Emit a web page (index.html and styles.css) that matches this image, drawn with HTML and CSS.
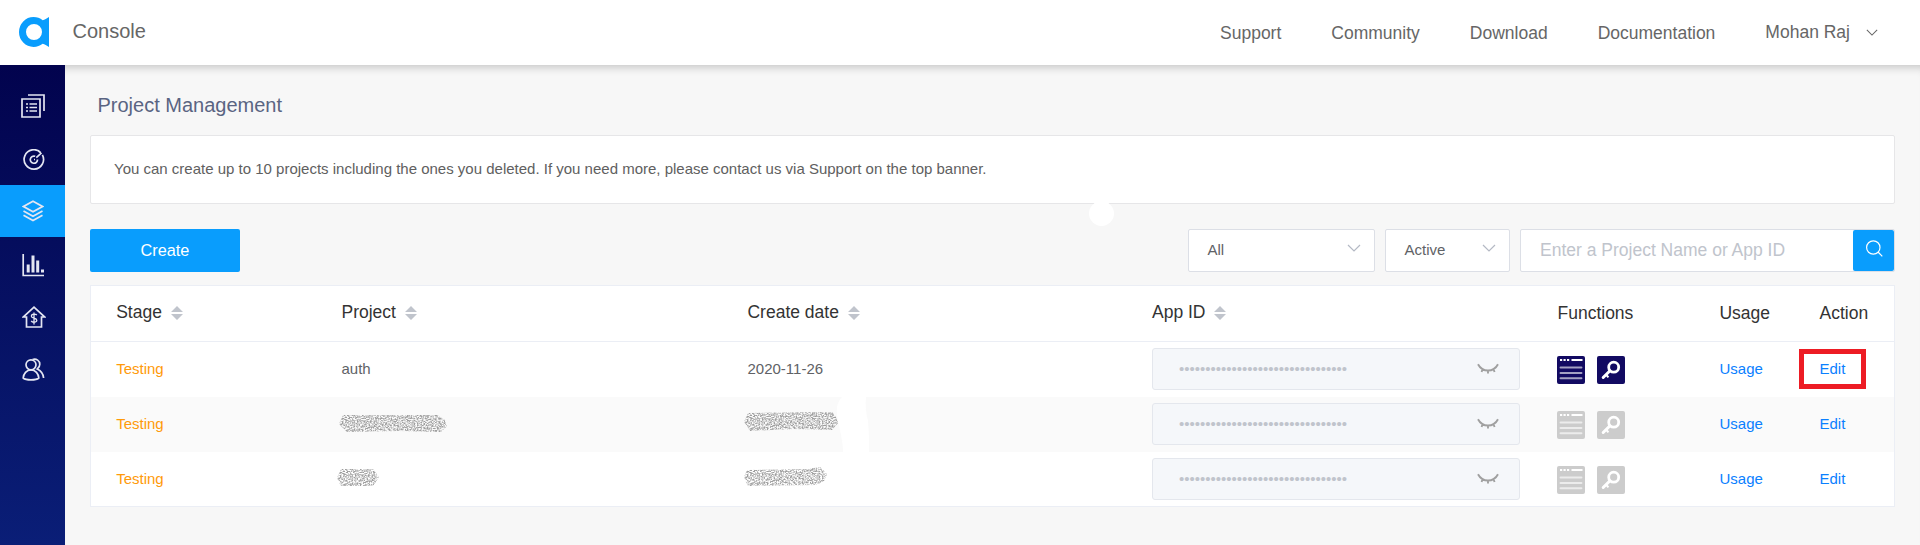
FILE: index.html
```html
<!DOCTYPE html>
<html lang="en">
<head>
<meta charset="utf-8">
<title>Console</title>
<link rel="stylesheet" href="styles.css">
</head>
<body>
<svg class="defs" width="0" height="0">
  <defs>
    <symbol id="sort" viewBox="0 0 12 14"><path d="M6 0l6 6H0zM6 14L0 8h12z" fill="#c0c4cc"/></symbol>
    <symbol id="chev" viewBox="0 0 14 8"><path d="M1 1l6 6 6-6" fill="none" stroke="currentColor" stroke-width="1.2"/></symbol>
    <symbol id="eye" viewBox="0 0 22 12"><path d="M1 1.200C5.500 9.600 16.500 9.600 21 1.200M5.600 6L4.600 9M11 7.500V10.600M16.400 6l1.200 3" fill="none" stroke="#a0a0a0" stroke-width="1.900"/></symbol>
    <symbol id="page" viewBox="0 0 28 28"><rect width="28" height="28" rx="2" fill="currentColor"/><path d="M3 4h2.200M6.500 4h2.200M10 4h2.200M14.500 4H25.500" stroke="#fff" stroke-width="2.200"/><path d="M3.500 11.500h21M3.500 17h21M3.500 22.300h21" stroke="#fff" stroke-opacity=".62" stroke-width="1.900" stroke-linecap="round"/></symbol>
    <symbol id="key" viewBox="0 0 28 28"><rect width="28" height="28" rx="2" fill="currentColor"/><g fill="none" stroke="#fff"><circle cx="16.700" cy="11.200" r="5" stroke-width="2.800"/><path d="M13 14.800L6.200 21.500" stroke-width="3" stroke-linecap="round"/><path d="M9 18.500l2.400 2.800" stroke-width="2"/></g></symbol>
    <filter id="speckle" x="0" y="0" width="1" height="1" color-interpolation-filters="sRGB">
      <feTurbulence type="fractalNoise" baseFrequency=".6 .9" numOctaves="2" seed="4"/>
      <feColorMatrix values="0 0 0 0 .62  0 0 0 0 .62  0 0 0 0 .62  3 0 0 0 -1.050"/>
      <feComposite in2="SourceGraphic" operator="in"/>
    </filter>
  </defs>
</svg>
<header class="topbar">
  <svg class="logo" viewBox="0 0 30 30"><path fill="#099dfd" fill-rule="evenodd" d="M14.500 0c3.600 0 6.600 1.200 9.200 3.200C25.600 2.700 27.800 1.500 30 0v30c-2.200-1.500-4.400-2.700-6.300-3.200C21.100 28.800 18.100 30 14.500 30A14.500 15 0 0 1 14.500 0zM15 7a8 8 0 1 0 0 16 8 8 0 0 0 0-16z"/></svg>
  <span class="brand">Console</span>
  <nav class="nav"><a>Support</a><a>Community</a><a>Download</a><a>Documentation</a></nav>
  <div class="user">Mohan Raj<svg class="user-chev"><use href="#chev"/></svg></div>
</header>
<div class="body">
  <aside class="side">
    <a><svg width="24" height="24" viewBox="0 0 24 24"><path d="M1 5h18v18H1zM7 1h16v16M5 10h2M8.500 10H16M5 13.500h2M8.500 13.500H16M5 17h2M8.500 17H16"/></svg></a>
    <a><svg class="nudge-r" width="22" height="22" viewBox="0 0 22 22"><path d="M17.900 3.800a9.700 9.700 0 1 0 1.500 2.100M14.500 10.500a3.600 3.600 0 1 1-2.300-3.200M13.300 8.600L18.500 3.800M11 10.500h1"/></svg></a>
    <a class="on"><svg class="nudge-x" width="22" height="22" viewBox="0 0 22 22"><path d="M11 1.200l9.500 5.300-9.500 5.300-9.500-5.300zM1.500 11l9.500 5.300 9.500-5.300M1.500 15.200l9.500 5.300 9.500-5.300"/></svg></a>
    <a><svg class="nudge-d" width="23" height="23" viewBox="0 0 23 23"><path d="M1.200 0v21.500H22"/><path d="M6.200 18.500v-8M11 18.500V1.500M15.700 18.500v-12M20.500 18.500v-3" stroke-width="3"/></svg></a>
    <a><svg class="nudge-s" width="24" height="23" viewBox="0 0 24 23"><path d="M4.500 21V11H1.200L12 1.200 22.800 11H19.500v10z"/><path d="M14.800 9.200c-1-1.600-5.400-1.400-5.400 1 0 2.600 5.400 1.400 5.400 4.100 0 2.400-4.600 2.500-5.600.6M12 6.500v12" stroke-width="1.300"/></svg></a>
    <a><svg class="nudge-s" width="23" height="23" viewBox="0 0 23 23"><circle cx="9" cy="6.800" r="5"/><path d="M9 11.800c-4.500 0-7.500 4-7.800 8.200C4 22.500 14 22.500 16.800 20 16.500 15.800 13.500 11.800 9 11.800zM10.500 1.500c4-1.200 7.300 1.200 7.300 4.800 0 2.200-1 3.600-2.500 4.700 3.500 1.700 6 4.500 6.300 9"/></svg></a>
  </aside>
  <main class="main">
    <h1>Project Management</h1>
    <section class="notice">You can create up to 10 projects including the ones you deleted. If you need more, please contact us via Support on the top banner.</section>
    <div class="tools">
      <button class="create">Create</button>
      <div class="select all">All<svg><use href="#chev"/></svg></div>
      <div class="select act">Active<svg><use href="#chev"/></svg></div>
      <div class="search"><span>Enter a Project Name or App ID</span><b><svg width="17" height="17" viewBox="0 0 17 17"><path d="M12.500 12.500l3.800 3.800M14 7.500a6.700 6.700 0 1 1-13.400 0 6.700 6.700 0 0 1 13.400 0z" fill="none" stroke="#fff" stroke-width="1.200"/></svg></b></div>
    </div>
    <section class="table">
      <div class="row head">
        <div>Stage<svg><use href="#sort"/></svg></div><div>Project<svg><use href="#sort"/></svg></div><div>Create date<svg><use href="#sort"/></svg></div><div>App ID<svg><use href="#sort"/></svg></div><div class="plain">Functions</div><div class="plain">Usage</div><div class="plain">Action</div>
      </div>
      <div class="row">
        <div class="stage">Testing</div><div>auth</div><div>2020-11-26</div>
        <div><span class="appid"><i>••••••••••••••••••••••••••••••••</i><svg><use href="#eye"/></svg></span></div>
        <div class="fn ready"><svg><use href="#page"/></svg><svg><use href="#key"/></svg></div>
        <div class="link">Usage</div><div class="link"><span class="marked">Edit</span></div>
      </div>
      <div class="row alt">
        <div class="stage">Testing</div>
        <div><svg class="smudge" width="108" height="20"><path filter="url(#speckle)" d="M4 1L98 1 106 6 108 12 102 18 60 17 8 18 0 10z"/></svg></div>
        <div><svg class="smudge up" width="94" height="20"><path filter="url(#speckle)" d="M4 1L88 0 92 5 94 11 88 18 50 17 6 19 0 10z"/></svg></div>
        <div><span class="appid"><i>••••••••••••••••••••••••••••••••</i><svg><use href="#eye"/></svg></span></div>
        <div class="fn"><svg><use href="#page"/></svg><svg><use href="#key"/></svg></div>
        <div class="link">Usage</div><div class="link">Edit</div>
        <svg class="wipe" width="34" height="55"><path fill="#fff" d="M6 0H30C29 8 30 16 32 24 33 34 33 45 33 55H7C7 44 4 34 2 24 0 14 0 6 6 0z"/></svg>
      </div>
      <div class="row">
        <div class="stage">Testing</div>
        <div><svg class="smudge low" width="42" height="20"><path filter="url(#speckle)" d="M4 1L36 1 42 9 36 18 4 18 0 10z"/></svg></div>
        <div><svg class="smudge last" width="83" height="20"><path filter="url(#speckle)" d="M3 3L64 2 76 0 83 7 80 14 72 18 4 19 0 10z"/></svg></div>
        <div><span class="appid"><i>••••••••••••••••••••••••••••••••</i><svg><use href="#eye"/></svg></span></div>
        <div class="fn"><svg><use href="#page"/></svg><svg><use href="#key"/></svg></div>
        <div class="link">Usage</div><div class="link">Edit</div>
      </div>
    </section>
    <span class="spot"></span>
  </main>
</div>
</body>
</html>
```
FILE: styles.css
```css
* { box-sizing: border-box; }
body { margin: 0; height: 545px; overflow: hidden; display: flex; flex-direction: column; background: #f7f7f7; color: #606266; font: 15px "Liberation Sans", Arial, sans-serif; }
.defs { position: absolute; }
svg { flex: none; display: block; }

.topbar { height: 65px; flex: none; display: flex; align-items: center; background: #fff; color: #666; padding-left: 19px; }
.logo { width: 30px; height: 30px; margin-top: -1px; }
.brand { font-size: 20px; margin-left: 23.500px; padding-bottom: 3px; }
.nav { display: flex; gap: 50px; margin-left: auto; padding-top: 2px; font-size: 17.500px; }
.user { display: flex; align-items: center; font-size: 17.500px; margin: 0 42px 0 50px; padding-bottom: 1px; }
.user-chev { width: 12px; height: 7px; margin-left: 16px; }

.body { flex: 1; display: flex; min-height: 0; }
.side { width: 65px; flex: none; padding-top: 15px; background: linear-gradient(#02034e, #0a1e77); }
.side a { height: 52.500px; display: flex; align-items: center; justify-content: center; }
.side a.on { height: 52px; background: #099dfd; }
.side svg { fill: none; stroke: #e4e6f2; stroke-width: 1.700; }
.nudge-r { margin: 2px 0 0 2px; }
.nudge-x { margin-left: 1px; }
.nudge-d { margin: 4px 0 0 2px; }
.nudge-s { margin: 3px 0 0 2px; }

.main { position: relative; flex: 1; padding: 0 25px; box-shadow: inset 0 10px 10px -8px rgba(0,0,0,.22); }
h1 { margin: 0; height: 70px; padding: 28px 0 0 7.500px; font-size: 20px; line-height: 24px; font-weight: 400; color: #5a6482; }
.notice { height: 69px; display: flex; align-items: center; padding: 0 0 2px 23px; background: #fff; border: 1px solid #e6e6e8; border-radius: 2px; color: #606060; }

.tools { display: flex; height: 43px; margin: 25px 0 13px; }
.create { width: 150px; border: 0; border-radius: 2px; background: #099dfd; color: #fff; font: 16.250px "Liberation Sans", Arial, sans-serif; margin-right: auto; }
.select { display: flex; align-items: center; justify-content: space-between; margin-right: 10px; padding: 0 0 2px 18.500px; background: #fff; border: 1px solid #dcdfe6; border-radius: 2px; }
.select svg { width: 14px; height: 8px; color: #b4b9c4; margin: 0 13px 4px 0; }
.all { width: 187px; }
.act { width: 125px; }
.search { width: 375px; display: flex; align-items: center; background: #fff; border: 1px solid #dcdfe6; border-radius: 2px; padding-left: 19px; font-size: 17.500px; color: #c0c4cc; }
.search b { width: 41px; height: 41px; margin-left: auto; display: flex; align-items: center; justify-content: center; background: #099dfd; border-radius: 2px; padding: 0 0 4px 2px; }

.table { height: 222px; background: #fff; border: 1px solid #ebeef5; }
.row { position: relative; height: 55px; display: grid; grid-template-columns: 225.300px 406px 404.500px 405.500px 162px 100px 1fr; align-items: center; padding: 0 0 2px 25.200px; }
.row > div { display: flex; align-items: center; }
.row.head { height: 56px; border-bottom: 1px solid #ebeef5; font-size: 17.500px; color: #333; }
.head svg { width: 12px; height: 14px; margin-left: 9px; }
.head .plain { padding-top: 2px; }
.alt { background: #fafafa; }
.row .stage { color: #ff9a0a; }
.row .link { color: #0a80ff; }
.appid { width: 368px; height: 42px; display: flex; align-items: center; justify-content: space-between; padding: 0 20px 0 26px; background: #f5f7fa; border: 1px solid #e4e7ed; border-radius: 3px; color: #c0c4cc; }
.appid i { font-style: normal; }
.appid svg { width: 22px; height: 12px; }
.fn { gap: 12px; color: #ccc; padding-top: 2px; margin-left: -.500px; }
.fn.ready { color: #120a62; }
.fn svg { width: 28px; height: 28px; }
.marked { border: 5px solid #ed1c24; padding: 6px 16px 7px 15px; margin-left: -20px; height: 40px; line-height: 17px; }
.smudge { margin-left: -2px; }
.smudge.up { margin: -3px 0 0 -3px; }
.smudge.low { margin: -2px 0 0 -4px; }
.smudge.last { margin: -3px 0 0 -3px; }
.wipe { position: absolute; left: 745px; top: 0; }
.spot { position: absolute; left: 1024px; top: 136px; width: 25px; height: 25px; border-radius: 50%; background: #fff; }
```
